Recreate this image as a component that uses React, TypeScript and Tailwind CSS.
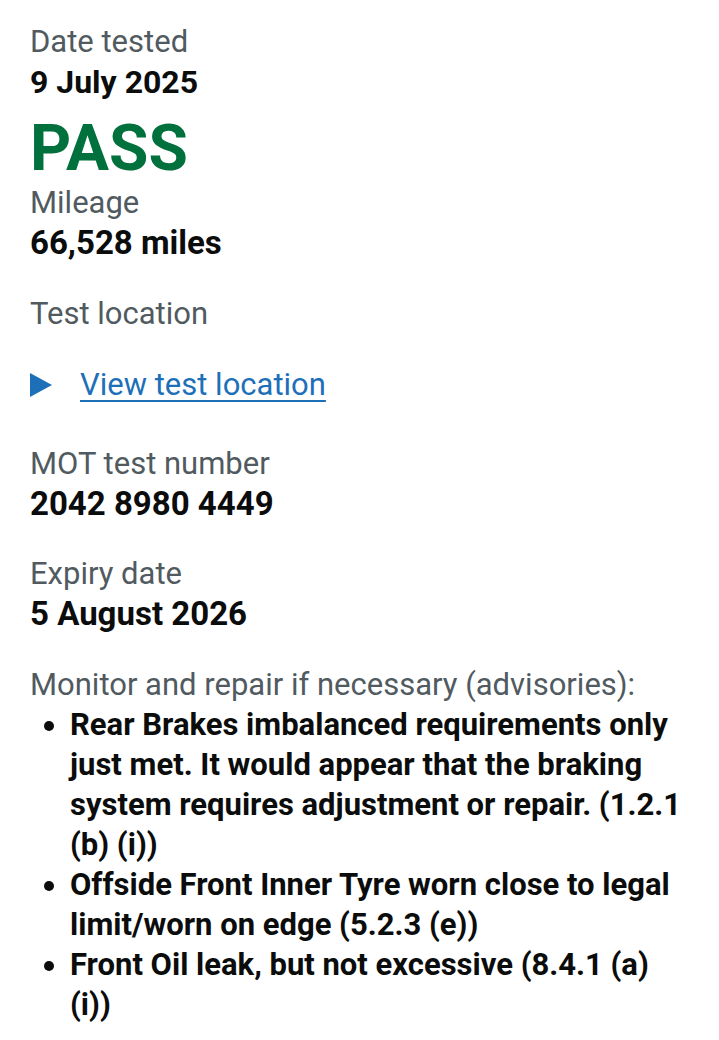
import React from "react";

const advisories: string[] = [
  "Rear Brakes imbalanced requirements only just met. It would appear that the braking system requires adjustment or repair. (1.2.1 (b) (i))",
  "Offside Front Inner Tyre worn close to legal limit/worn on edge (5.2.3 (e))",
  "Front Oil leak, but not excessive (8.4.1 (a) (i))",
];

const Label: React.FC<{ children: React.ReactNode }> = ({ children }) => (
  <p className="text-[31px] text-[#505a5f]">{children}</p>
);

const Value: React.FC<{ children: React.ReactNode }> = ({ children }) => (
  <p className="text-[33px] font-bold text-[#0b0c0c]">{children}</p>
);

const App: React.FC = () => {
  return (
    <div
      className="min-h-[1040px] bg-white pl-[30px] pr-[30px] pt-[22px] leading-[40px] text-[#0b0c0c]"
      style={{ fontFamily: "Roboto, 'Liberation Sans', sans-serif" }}
    >
      {/* Date + result */}
      <Label>Date tested</Label>
      <p className="text-[32px] font-bold text-[#0b0c0c]">9 July 2025</p>
      <p className="mt-[12px] text-[64px] leading-[69px] font-bold text-[#00703c]">PASS</p>

      <Label>Mileage</Label>
      <Value>66,528 miles</Value>

      {/* Location */}
      <div className="mt-[31px]">
        <Label>Test location</Label>
      </div>
      <div className="mt-[31px] flex items-center gap-[28px]">
        <svg width="22" height="24" viewBox="0 0 22 24" className="shrink-0">
          <polygon points="0,0 22,12 0,24" fill="#1d70b8" />
        </svg>
        <a
          href="#"
          className="text-[31px] text-[#1d70b8] underline decoration-[2px] underline-offset-[5px]"
        >
          View test location
        </a>
      </div>

      <div className="mt-[39px]">
        <Label>MOT test number</Label>
        <Value>2042 8980 4449</Value>
      </div>

      <div className="mt-[30px]">
        <Label>Expiry date</Label>
        <Value>5 August 2026</Value>
      </div>

      {/* Advisories */}
      <div className="mt-[31px]">
        <Label>Monitor and repair if necessary (advisories):</Label>
        <ul className="list-disc pl-[40px] marker:text-[#0b0c0c]">
          {advisories.map((item) => (
            <li key={item} className="text-[31px] font-bold">
              {item}
            </li>
          ))}
        </ul>
      </div>
    </div>
  );
};

export default App;
